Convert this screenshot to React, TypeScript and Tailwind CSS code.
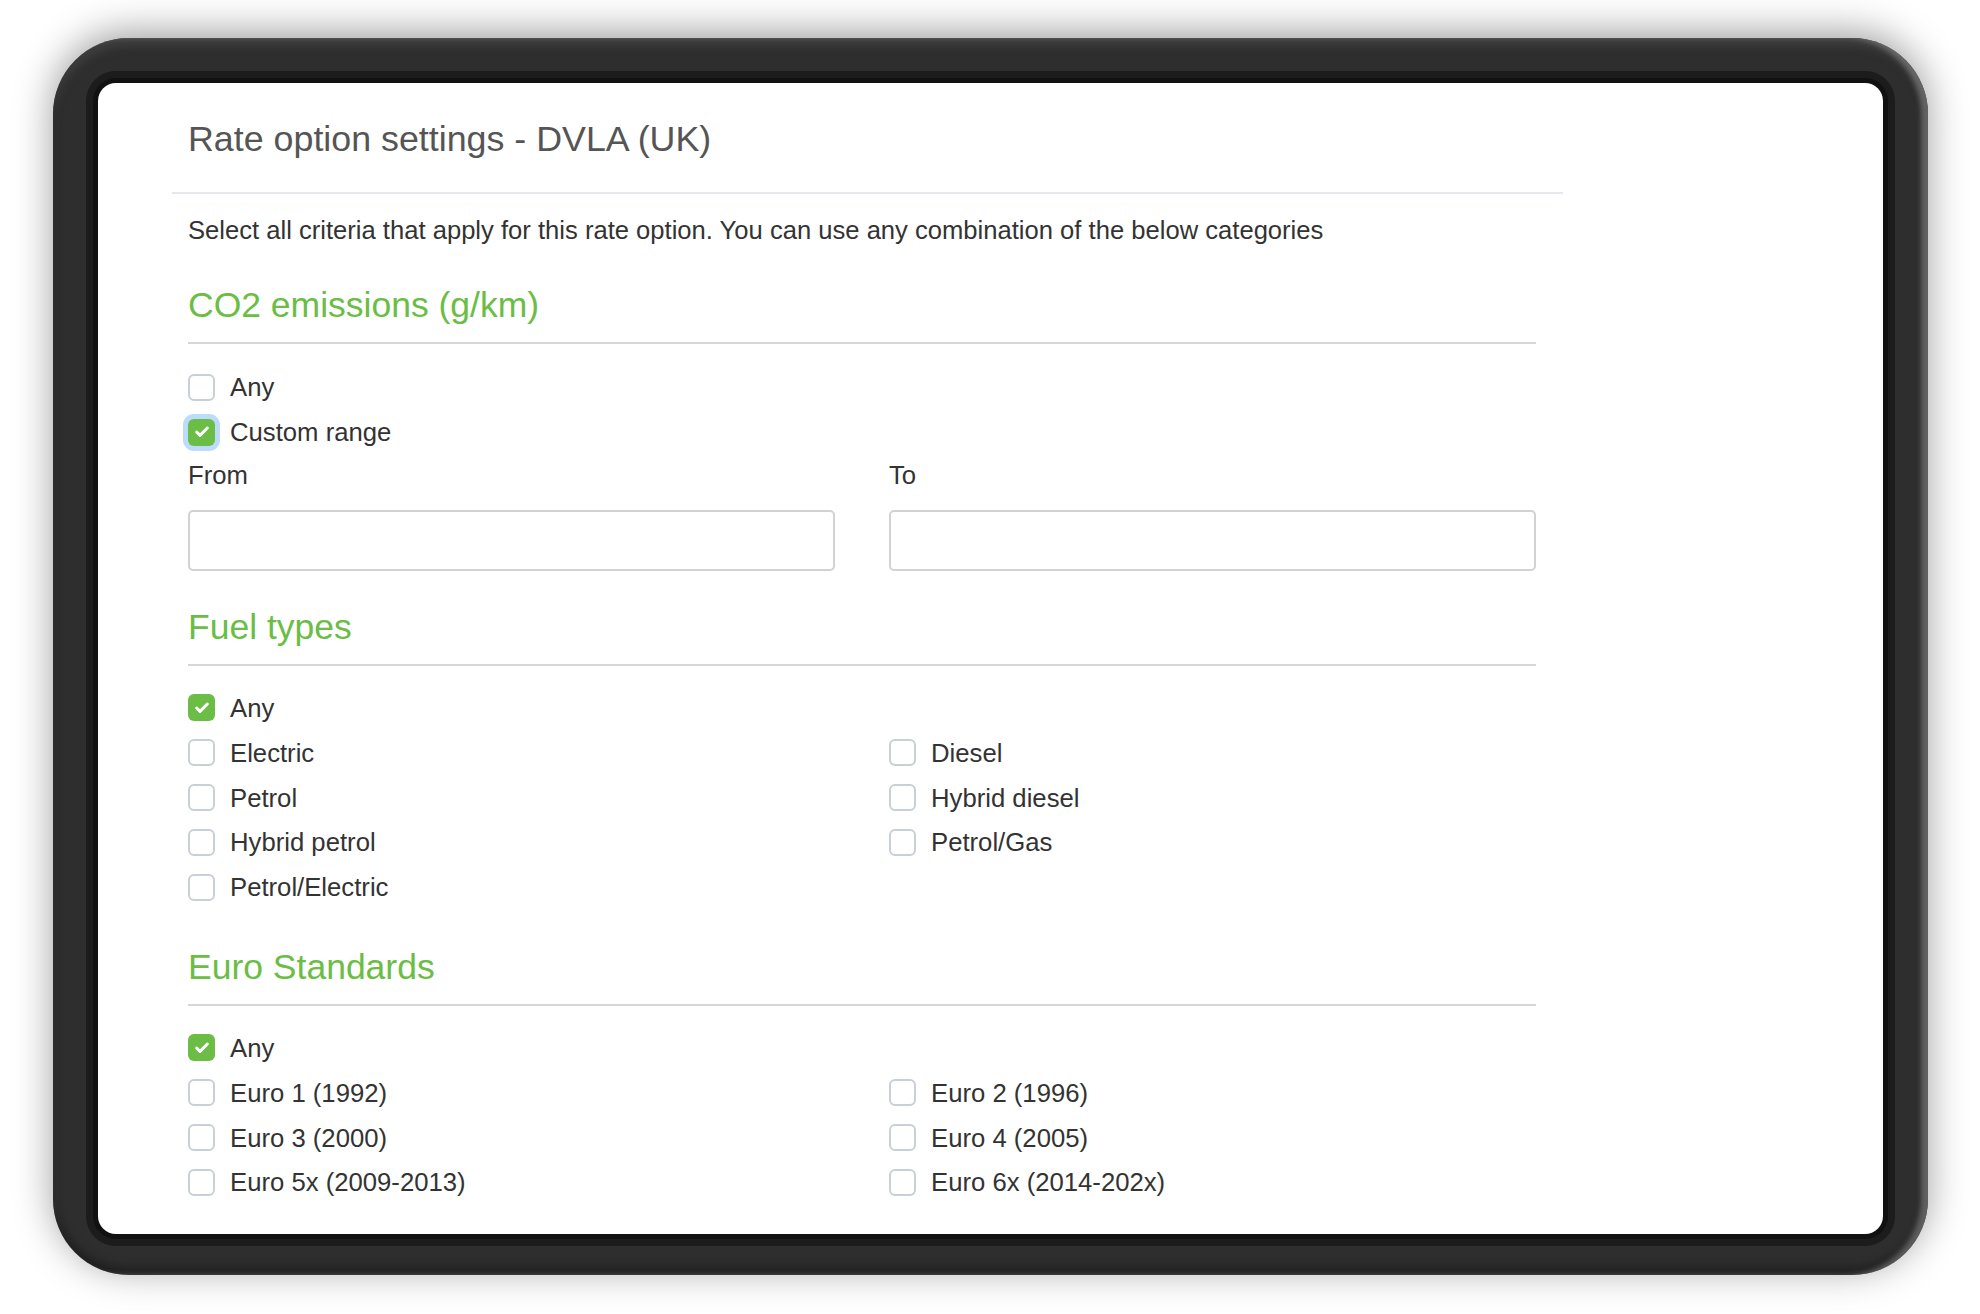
import { Check } from "lucide-react";

// Rate option settings panel shown inside a dark tablet-style bezel

type Option = { label: string; checked?: boolean };

const fuelLeft: Option[] = [
  { label: "Electric" },
  { label: "Petrol" },
  { label: "Hybrid petrol" },
  { label: "Petrol/Electric" },
];
const fuelRight: Option[] = [{ label: "Diesel" }, { label: "Hybrid diesel" }, { label: "Petrol/Gas" }];

const euroLeft: Option[] = [{ label: "Euro 1 (1992)" }, { label: "Euro 3 (2000)" }, { label: "Euro 5x (2009-2013)" }];
const euroRight: Option[] = [{ label: "Euro 2 (1996)" }, { label: "Euro 4 (2005)" }, { label: "Euro 6x (2014-202x)" }];

function CheckRow({ label, checked, focused }: { label: string; checked?: boolean; focused?: boolean }) {
  return (
    <label className="flex h-[44.8px] items-center gap-[15px]">
      <span
        className={`flex h-[27px] w-[27px] shrink-0 items-center justify-center rounded-[6px] ${
          checked ? "bg-[#6bbd45]" : "border-2 border-[#c9cfd8] bg-white"
        } ${focused ? "ring-[5px] ring-[#bcdcfb]" : ""}`}
      >
        {checked && <Check className="h-[16px] w-[16px] text-white" strokeWidth={4.5} />}
      </span>
      <span className="text-[25.7px] leading-[30px] text-[#333]">{label}</span>
    </label>
  );
}

function SectionHeading({ title, first }: { title: string; first?: boolean }) {
  return (
    <div className={first ? "mt-[39px]" : "mt-[36px]"}>
      <h2 className="text-[35.5px] leading-[42px] text-[#6bbd45]">{title}</h2>
      <div className="mt-[16px] h-[2px] bg-[#d6d6d6]" />
    </div>
  );
}

function TwoColumns({ left, right }: { left: Option[]; right: Option[] }) {
  return (
    <div className="grid grid-cols-2 gap-x-[54px]">
      <div>
        {left.map((o) => (
          <CheckRow key={o.label} label={o.label} checked={o.checked} />
        ))}
      </div>
      <div>
        {right.map((o) => (
          <CheckRow key={o.label} label={o.label} checked={o.checked} />
        ))}
      </div>
    </div>
  );
}

export default function App() {
  return (
    <div
      className="h-[1314px] w-[1980px] overflow-hidden bg-white pl-[53px] pt-[38px]"
      style={{ fontFamily: '"Liberation Sans", Arial, sans-serif' }}
    >
      {/* Bezel */}
      <div className="h-[1237px] w-[1875px] rounded-[76px] bg-[#2e2e2e] px-[45px] pb-[41px] pt-[45px] shadow-[0_-6px_38px_rgba(0,0,0,0.38),inset_-7px_0_5px_rgba(150,150,150,0.5),inset_0_-8px_10px_rgba(0,0,0,0.3),inset_0_8px_8px_rgba(70,70,70,0.7)]">
        <div className="h-full w-full overflow-hidden rounded-[18px] bg-white pt-[35px] shadow-[0_0_0_5px_#111,0_0_0_12px_rgba(10,10,10,0.5)]">
          <h1 className="ml-[90px] text-[35.8px] leading-[42px] text-[#555]">Rate option settings - DVLA (UK)</h1>
          <div className="ml-[74px] mt-[32px] h-[2px] w-[1391px] bg-[#e4e7ec]" />

          <div className="ml-[90px] w-[1348px]">
            <p className="mt-[21px] text-[25.6px] leading-[30px] text-[#333]">
              Select all criteria that apply for this rate option. You can use any combination of the below categories
            </p>

            {/* CO2 emissions */}
            <SectionHeading title="CO2 emissions (g/km)" first />
            <div className="mt-[21px]">
              <CheckRow label="Any" />
              <CheckRow label="Custom range" checked focused />
            </div>
            <div className="mt-[5px] grid grid-cols-2 gap-x-[54px]">
              <div>
                <div className="text-[25.7px] leading-[30px] text-[#333]">From</div>
                <input className="mt-[20px] h-[61px] w-full rounded-[5px] border-2 border-[#d2d2d2] bg-white outline-none" />
              </div>
              <div>
                <div className="text-[25.7px] leading-[30px] text-[#333]">To</div>
                <input className="mt-[20px] h-[61px] w-full rounded-[5px] border-2 border-[#d2d2d2] bg-white outline-none" />
              </div>
            </div>

            {/* Fuel types */}
            <div className="mt-[-1px]">
              <SectionHeading title="Fuel types" />
            </div>
            <div className="mt-[20px]">
              <CheckRow label="Any" checked />
              <TwoColumns left={fuelLeft} right={fuelRight} />
            </div>

            {/* Euro standards */}
            <SectionHeading title="Euro Standards" />
            <div className="mt-[20px]">
              <CheckRow label="Any" checked />
              <TwoColumns left={euroLeft} right={euroRight} />
            </div>
          </div>
        </div>
      </div>
    </div>
  );
}
